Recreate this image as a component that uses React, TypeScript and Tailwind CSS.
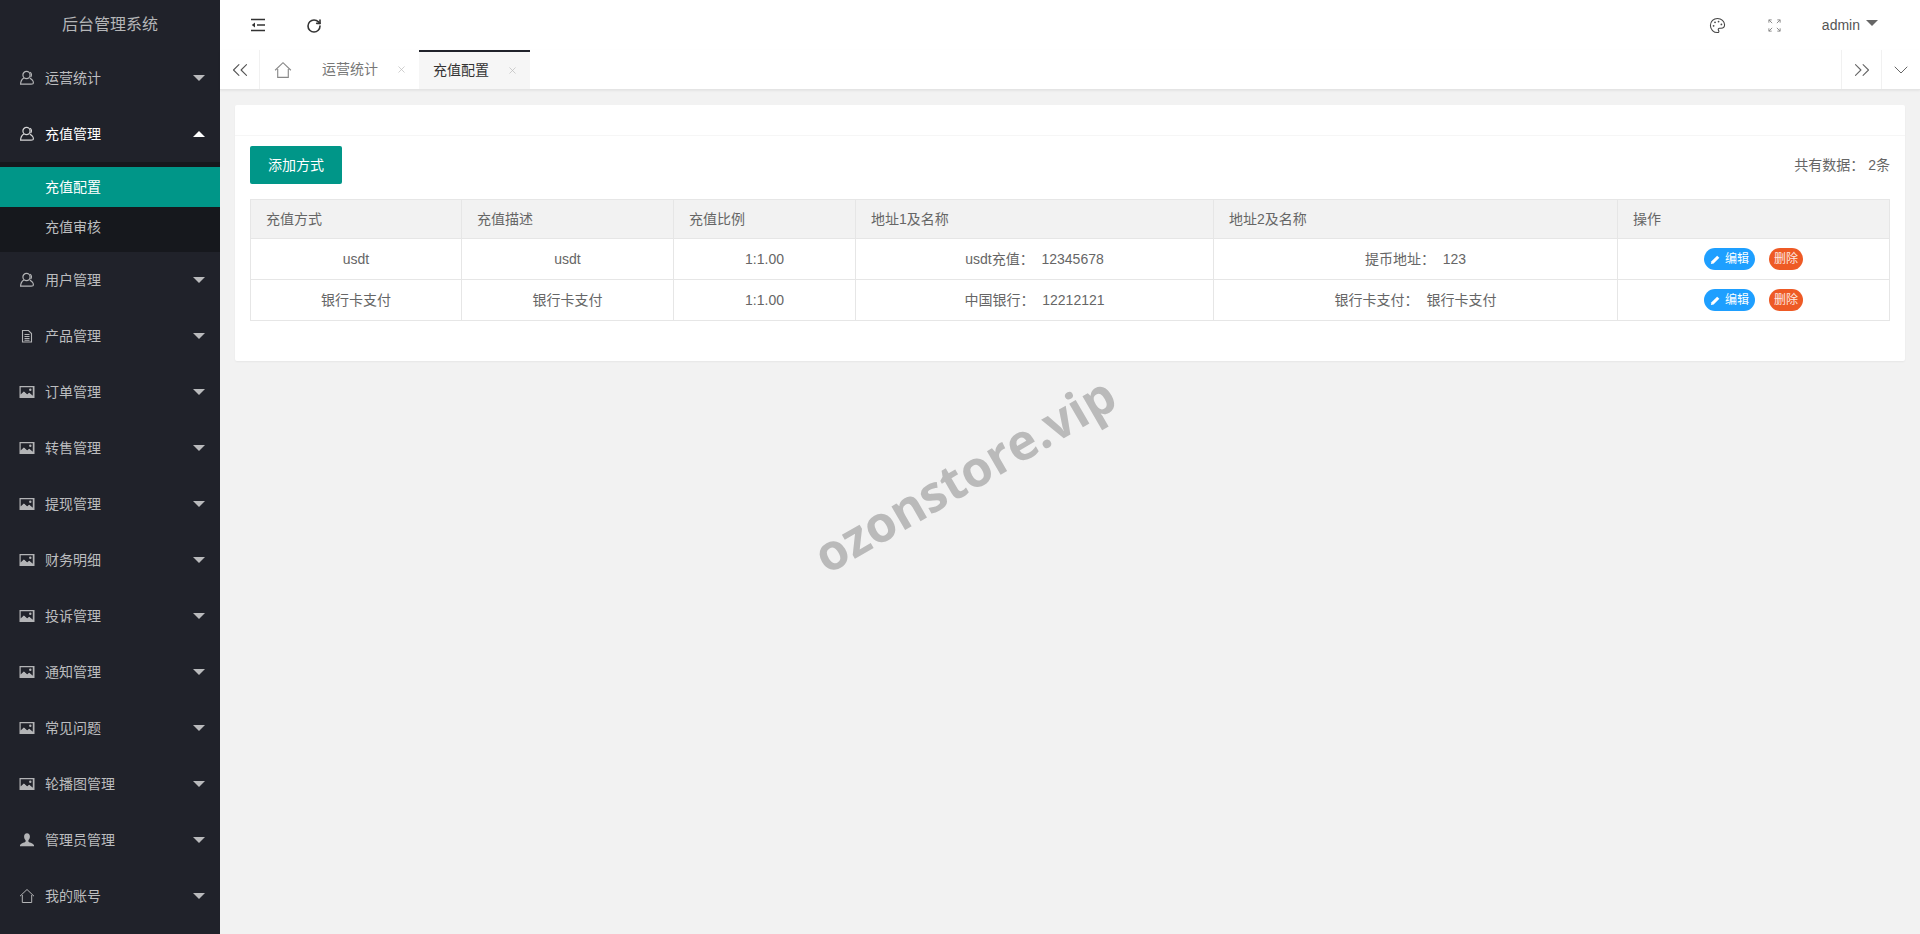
import React from "react";
import { ChevronsLeft, ChevronsRight, ChevronDown, Palette, RotateCw, X } from "lucide-react";

const FONT = "font-['Liberation_Sans','Noto_Sans_CJK_SC',sans-serif]";

const UserOutline = () => (
  <svg viewBox="0 0 16 16" className="w-[16px] h-[16px]" fill="none" stroke="currentColor" strokeWidth="1.2">
    <circle cx="7.5" cy="5" r="3.6" />
    <path d="M4.8 8C3 9.2 1.6 11 1.6 14.2h10.6c.8 0 2.2-.3 2.2-1.2 0-1.6-1.2-3.6-3.6-5" />
    <path d="M11 2.2c1.6.6 2 3.4.6 5" />
  </svg>
);
const ImageIcon = () => (
  <svg viewBox="0 0 16 16" className="w-[16px] h-[16px]" fill="currentColor">
    <path fillRule="evenodd" d="M0.5 2h15v12h-15zM1.700 3.200v7.400l3.200-3.200 3.300 3 2-1.600 3.600 3V3.200z" />
    <path d="M1.500 13.500v-2.500l3.400-3.300 3.300 3 2-1.600 4.300 3.800v.6z" />
    <circle cx="11.300" cy="5.800" r="1.200" />
  </svg>
);
const DocIcon = () => (
  <svg viewBox="0 0 16 16" className="w-[16px] h-[16px]" fill="none" stroke="currentColor" strokeWidth="1.1">
    <path d="M3.500 2.500h6l3 3v8.500h-9z" />
    <path d="M5.500 6.500h5M5.500 8.500h5M5.500 10.500h5M5.500 12.300h5" />
  </svg>
);
const PersonSolid = () => (
  <svg viewBox="0 0 16 16" className="w-[16px] h-[16px]" fill="currentColor">
    <path d="M8 1.200c1.900 0 2.900 1.400 2.900 3.300 0 1.600-.7 3-1.500 3.700v1.200c0 .9 4.600 1.500 5.600 3.600v1.200H1v-1.200c1-2.100 5.600-2.700 5.600-3.600V8.200C5.800 7.500 5.100 6.100 5.100 4.500c0-1.900 1-3.300 2.900-3.300z" />
  </svg>
);
const HomeIcon = ({ className = "w-[16px] h-[16px]" }: { className?: string }) => (
  <svg viewBox="0 0 16 16" className={className} fill="none" stroke="currentColor" strokeWidth="1">
    <path d="M1 8.200 8 1.500l7 6.700M3.300 7v7.500h9.400V7" />
  </svg>
);
const Caret = ({ up = false }: { up?: boolean }) => (
  <span
    className={
      up
        ? "w-0 h-0 border-x-[6px] border-x-transparent border-b-[6px] border-b-white"
        : "w-0 h-0 border-x-[6px] border-x-transparent border-t-[6px] border-t-[#b9babc]"
    }
  />
);

const items: { label: string; icon: React.ReactNode }[] = [
  { label: "用户管理", icon: <UserOutline /> },
  { label: "产品管理", icon: <DocIcon /> },
  { label: "订单管理", icon: <ImageIcon /> },
  { label: "转售管理", icon: <ImageIcon /> },
  { label: "提现管理", icon: <ImageIcon /> },
  { label: "财务明细", icon: <ImageIcon /> },
  { label: "投诉管理", icon: <ImageIcon /> },
  { label: "通知管理", icon: <ImageIcon /> },
  { label: "常见问题", icon: <ImageIcon /> },
  { label: "轮播图管理", icon: <ImageIcon /> },
  { label: "管理员管理", icon: <PersonSolid /> },
  { label: "我的账号", icon: <HomeIcon /> },
];

const NavItem = ({ label, icon, open = false }: { label: string; icon: React.ReactNode; open?: boolean }) => (
  <div className={`h-[56px] flex items-center pl-[19px] pr-[15px] text-[14px] ${open ? "text-white" : "text-[#bcbdbf]"}`}>
    <span className={`w-[26px] flex items-center ${open ? "text-[#d5d5d6]" : "text-[#b3b4b6]"}`}>{icon}</span>
    <span className="flex-1">{label}</span>
    <Caret up={open} />
  </div>
);

const EditIcon = () => (
  <svg viewBox="0 0 12 12" className="w-[11px] h-[11px] mr-[4px]" fill="currentColor">
    <path d="M1 11l.6-3L7.800 1.800l2.400 2.400L4 10.400z" />
  </svg>
);

const Actions = () => (
  <div className="flex justify-center items-center gap-[14px]">
    <span className="w-[51px] h-[22px] rounded-[11px] bg-[#1e9fff] text-white text-[12px] flex items-center justify-center">
      <EditIcon />
      编辑
    </span>
    <span className="w-[34px] h-[22px] rounded-[11px] bg-[#ee5a25] text-[#fde9e0] text-[12px] flex items-center justify-center">
      删除
    </span>
  </div>
);

const head = ["充值方式", "充值描述", "充值比例", "地址1及名称", "地址2及名称", "操作"];
const rows = [
  ["usdt", "usdt", "1:1.00", "usdt充值：\u00a0 12345678", "提币地址：\u00a0 123"],
  ["银行卡支付", "银行卡支付", "1:1.00", "中国银行：\u00a0 12212121", "银行卡支付：\u00a0 银行卡支付"],
];
const widths = ["w-[211px]", "w-[212px]", "w-[182px]", "w-[358px]", "w-[404px]", "w-[272px]"];

export default function App() {
  return (
    <div className={`${FONT} relative flex h-[934px] w-[1920px] overflow-hidden bg-[#f2f2f2] text-[#666] text-[14px]`}>
      <aside className="w-[220px] shrink-0 bg-[#20222a] flex flex-col">
        <div className="h-[50px] flex items-center justify-center text-[16px] text-[#b5b6b8]">后台管理系统</div>
        <NavItem label="运营统计" icon={<UserOutline />} />
        <NavItem label="充值管理" icon={<UserOutline />} open />
        <div className="bg-[#16181d] py-[5px] text-[14px]">
          <div className="h-[40px] bg-[#009688] text-white flex items-center pl-[45px]">充值配置</div>
          <div className="h-[40px] text-[#bcbdbf] flex items-center pl-[45px]">充值审核</div>
        </div>
        {items.map((it) => (
          <NavItem key={it.label} label={it.label} icon={it.icon} />
        ))}
      </aside>

      <main className="flex-1 min-w-0 flex flex-col">
        <header className="h-[50px] bg-white flex items-center text-[#333]">
          <div className="w-[46px] flex justify-end">
            <svg viewBox="0 0 16 16" className="w-[16px] h-[16px]" fill="none" stroke="currentColor" strokeWidth="1.3">
              <path d="M1 2.500h14M7 8h8M1 13.500h14" />
              <path d="M5 5.500 1.800 8 5 10.500z" fill="currentColor" stroke="none" />
            </svg>
          </div>
          <RotateCw className="w-[16px] h-[16px] ml-[40px] mt-[1px]" strokeWidth={2.4} />
          <div className="flex-1" />
          <Palette className="w-[17px] h-[17px] text-[#444] mt-[1px]" strokeWidth={1.5} />
          <svg viewBox="0 0 16 16" className="w-[15px] h-[15px] ml-[41px] text-[#888] mt-[1px]" fill="none" stroke="currentColor" strokeWidth="1">
            <path d="M2 2l3.500 3.500M2 2v3M2 2h3M14 2l-3.500 3.500M14 2v3M14 2h-3M2 14l3.500-3.500M2 14v-3M2 14h3M14 14l-3.500-3.500M14 14v-3M14 14h-3" />
          </svg>
          <span className="ml-[40px] text-[14px] text-[#555]">admin</span>
          <span className="ml-[6px] mb-[5px] w-0 h-0 border-x-[6px] border-x-transparent border-t-[6px] border-t-[#666]" />
          <div className="w-[42px]" />
        </header>

        <nav className="h-[40px] bg-white flex border-b border-[#e4e4e4] shadow-[0_1px_2px_rgba(0,0,0,0.06)]">
          <div className="w-[40px] flex items-center justify-center border-r border-[#f1f1f1] text-[#555]">
            <ChevronsLeft className="w-[26px] h-[26px]" strokeWidth={1} />
          </div>
          <div className="w-[46px] flex items-center justify-center text-[#888]">
            <HomeIcon className="w-[18px] h-[18px]" />
          </div>
          <div className="w-[113px] flex items-center pl-[16px] text-[#777]">
            <span>运营统计</span>
            <X className="w-[11px] h-[11px] ml-[18px] text-[#bbb]" strokeWidth={1.5} />
          </div>
          <div className="w-[111px] h-[39px] flex items-center pl-[14px] bg-[#f6f6f6] border-t-2 border-[#20222a] text-[#333]">
            <span>充值配置</span>
            <X className="w-[11px] h-[11px] ml-[18px] text-[#bbb]" strokeWidth={1.5} />
          </div>
          <div className="flex-1" />
          <div className="w-[40px] flex items-center justify-center border-l border-[#f1f1f1] text-[#666]">
            <ChevronsRight className="w-[26px] h-[26px]" strokeWidth={1} />
          </div>
          <div className="w-[39px] flex items-center justify-center border-l border-[#f1f1f1] text-[#666]">
            <ChevronDown className="w-[24px] h-[24px]" strokeWidth={1} />
          </div>
        </nav>

        <div className="p-[15px]">
          <section className="bg-white rounded-[2px] shadow-[0_1px_2px_rgba(0,0,0,0.05)] h-[256px]">
            <div className="h-[31px] border-b border-[#f6f6f6]" />
            <div className="px-[15px] pt-[10px]">
              <div className="flex items-center justify-between h-[38px]">
                <button className="w-[92px] h-[38px] rounded-[2px] bg-[#009688] text-white text-[14px]">添加方式</button>
                <span className="text-[14px] text-[#666]">共有数据： 2条</span>
              </div>
              <table className="mt-[15px] w-[1639px] table-fixed border-collapse border border-[#e0e0e0] text-[14px]">
                <thead>
                  <tr className="h-[39px] bg-[#f2f2f2]">
                    {head.map((h, i) => (
                      <th key={h} className={`${widths[i]} border border-[#e6e6e6] pl-[15px] text-left font-normal`}>
                        {h}
                      </th>
                    ))}
                  </tr>
                </thead>
                <tbody>
                  {rows.map((r) => (
                    <tr key={r[3]} className="h-[41px]">
                      {r.map((c, i) => (
                        <td key={i} className="border border-[#e6e6e6] text-center">
                          {c}
                        </td>
                      ))}
                      <td className="border border-[#e6e6e6]">
                        <Actions />
                      </td>
                    </tr>
                  ))}
                </tbody>
              </table>
            </div>
          </section>
        </div>
      </main>

      <div className="absolute left-[964px] top-[474px] -translate-x-1/2 -translate-y-1/2 rotate-[-30deg] whitespace-nowrap font-['Open_Sans',sans-serif] font-bold text-[50px] leading-none text-[#bababa]">
        ozonstore.vip
      </div>
    </div>
  );
}
